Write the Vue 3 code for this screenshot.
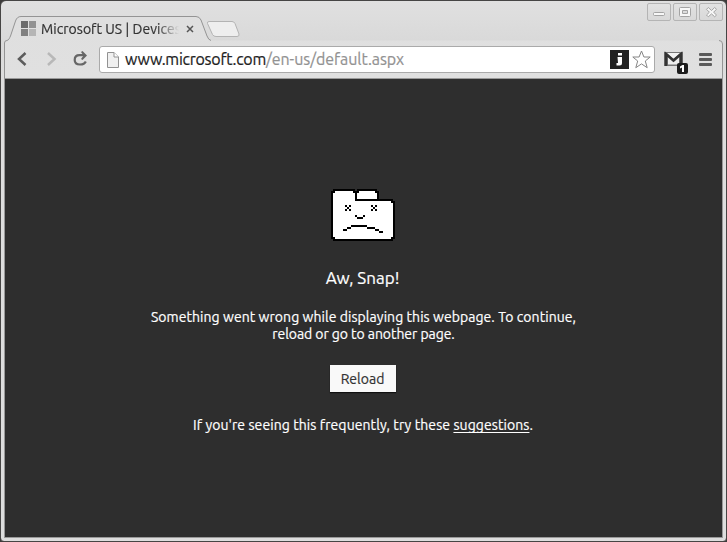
<script setup>
const face = [
  [1,0,11,1],[13,0,10,1],[0,1,1,24],[12,1,1,5],[23,1,1,5],[12,5,19,1],[31,6,1,19],[1,25,30,1],
  [1,1,1,1],[11,1,1,1],[13,1,1,1],[22,1,1,1],[1,24,1,1],[30,24,1,1],[30,6,1,1],
  [7,8,1,1],[9,8,1,1],[8,9,1,1],[7,10,1,1],[9,10,1,1],
  [20,8,1,1],[22,8,1,1],[21,9,1,1],[20,10,1,1],[22,10,1,1],
  [12,13,1,1],[16,13,1,1],[13,14,3,1],
  [10,18,8,1],[8,19,2,1],[18,19,4,1],[6,20,2,1],[22,20,2,1],[24,21,2,1]
]
</script>

<template>
  <div class="window">
    <svg class="frame" width="727" height="79" viewBox="0 0 727 79">
      <defs>
        <linearGradient id="bar" x1="0" y1="0" x2="0" y2="1"><stop offset="0" stop-color="#dfdfdf"/><stop offset="1" stop-color="#e0e0e0"/></linearGradient>
        <linearGradient id="bt" x1="0" y1="0" x2="0" y2="1"><stop offset="0" stop-color="#e2e2e2"/><stop offset="1" stop-color="#d8d8d8"/></linearGradient>
      </defs>
      <path d="M4.5 79V43Q4.500 40.500 7 40.500C9 40 9.500 38 10.500 36L15.500 21Q17 16.500 21 16.500H196Q199.500 16.500 201 20L207 36Q209 40.500 212 40.500H719Q722.500 40.500 722.500 44V79Z" fill="url(#bar)"/>
      <path d="M4.500 79V43Q4.500 40.500 7 40.500C9 40 9.500 38 10.500 36L15.500 21Q17 16.500 21 16.500H196Q199.500 16.500 201 20L207 36Q208.500 40 211 40.500" fill="none" stroke="#949494"/>
      <path d="M719 40.500Q722.500 40.500 722.500 44V79" fill="none" stroke="#949494"/>
      <path d="M209 21.500H232Q234 21.500 235 23.500L239 34Q239.500 36.500 237 36.500H216Q213.500 36.500 212.500 34.500L207.500 23.500Q207 21.500 209 21.500Z" fill="#eee" stroke="#b3b3b3"/>
      <g fill="url(#bt)" stroke="#b4b4b4"><rect x="647.500" y="3.500" width="23" height="17" rx="1.500"/><rect x="673.500" y="3.500" width="23" height="17" rx="1.500"/><rect x="699.500" y="3.500" width="23" height="17" rx="1.500"/></g>
      <g fill="#f7f7f7" stroke="#a3a3a3"><rect x="653.500" y="12.500" width="11" height="3" rx="1"/><path fill-rule="evenodd" d="M680.500 7.500H689.500Q690.500 7.500 690.500 8.500V15.500Q690.500 16.500 689.500 16.500H680.500Q679.500 16.500 679.500 15.500V8.500Q679.500 7.500 680.500 7.500ZM682.500 10.500V13.500H687.500V10.500Z"/><path d="M708.300 7.500L711.500 10.500L714.700 7.500L716.500 9.300L713.600 12.200L716.500 15L714.700 16.800L711.500 13.900L708.300 16.800L706.500 15L709.400 12.200L706.500 9.300Z"/></g>
    </svg>

    <header class="tabs">
      <svg class="favicon" width="15" height="15"><path fill="#6b6b6b" d="M0 0h7v7H0z"/><path fill="#929292" d="M8 0h7v7H8z"/><path fill="#808080" d="M0 8h7v7H0z"/><path fill="#b5b5b5" d="M8 8h7v7H8z"/></svg>
      <span class="tab-title">Microsoft US | Devices</span>
      <svg class="close" width="8" height="8" viewBox="0 0 8 8"><path d="M1 1L7 7M7 1L1 7" stroke="#555" stroke-width="1.500"/></svg>
    </header>

    <nav class="toolbar">
      <svg class="nav-icons" width="94" height="38" viewBox="0 0 94 38" fill="none">
        <path d="M20.500 13L14 19L20.500 25" stroke="#5c5c5c" stroke-width="2.500"/>
        <path d="M43 13L49.500 19L43 25" stroke="#b8b8b8" stroke-width="2.500"/>
        <path d="M79 15.200H74.500Q69.700 15.200 69.700 20Q69.700 24.500 75 24.500Q79.500 24.500 80.800 21.500" stroke="#666" stroke-width="2.200"/><path d="M76 12L77.500 11L82 15.500L77.500 20L76 19L78.500 15.500Z" fill="#666"/>
      </svg>
      <div class="address">
        <svg class="page-icon" width="12" height="16" viewBox="0 0 12 16"><path d="M.5 .5H7L11.500 5V15.500H.5Z" fill="#f0f0f0" stroke="#929292"/><path d="M7 .5V5H11.500" fill="#fff" stroke="#929292"/></svg>
        <span class="url"><b>www.microsoft.com</b>/en-us/default.aspx</span>
        <svg class="actions" width="44" height="22" viewBox="610 49 44 22"><rect x="610" y="50" width="19" height="19" fill="#222"/><path d="M618 53h4v2.500h-4zM617.500 57H622v6q0 2.500-2.500 2.500h-3V63h1.500z" fill="#fff"/><path d="M641.500 51L643.900 57H650.200L645.300 61L647.200 67.700L641.500 63.900L635.800 67.700L637.700 61L632.800 57H639.100Z" fill="#fff" stroke="#858585" stroke-linejoin="round"/></svg>
      </div>
      <svg class="extras" width="60" height="38" viewBox="660 41 60 38">
        <rect x="664" y="52" width="19" height="14" fill="#777"/><path d="M667 53H680L673.500 59Z" fill="#f2f2f2"/><path d="M668 56.500L673.500 62L679 56.500V64.500H668Z" fill="#eee"/><path d="M666 66V54L673.500 60.500L681 54V66" fill="none" stroke="#333" stroke-width="2.600"/>
        <rect x="677" y="63" width="11" height="11" rx="2" fill="#1c1c1c"/><path d="M680 66.500L682.500 65H684V72H682V67.500L680 68.500Z" fill="#fff"/>
        <g fill="#5a5a5a"><rect x="699" y="53" width="13" height="3" rx="1"/><rect x="699" y="58" width="13" height="3" rx="1"/><rect x="699" y="63" width="13" height="3" rx="1"/></g>
      </svg>
    </nav>

    <main class="content">
      <svg class="sad" width="64" height="52" viewBox="0 0 32 26" shape-rendering="crispEdges"><path d="M1 1H23V6H31V25H1Z" fill="#fff"/><rect v-for="(r,i) in face" :key="i" :x="r[0]" :y="r[1]" :width="r[2]" :height="r[3]" fill="#000"/></svg>
      <h1>Aw, Snap!</h1>
      <p class="msg">Something went wrong while displaying this webpage. To continue,<br><span class="second">reload or go to another page.</span></p>
      <button>Reload</button>
      <p class="hint">If you're seeing this frequently, try these <a>suggestions</a>.</p>
    </main>
  </div>
</template>

<style>
body { background: #3c3b3a; overflow: hidden; }
</style>
<style scoped>
.window { box-sizing: border-box; position: relative; width: 727px; height: 542px; padding: 1px 4px 4px; font-family: Ubuntu, "Noto Sans", sans-serif; background: linear-gradient(#e0e0e0, #d9d9d9 40px, #dedede 79px, #ddd); border: 1px solid #464544; border-radius: 6px 6px 4px 4px; display: flex; flex-direction: column; }
.frame { position: absolute; left: -1px; top: -1px; }
.tabs { position: relative; height: 39px; flex: none; display: flex; padding-left: 16px; box-sizing: border-box; }
.favicon { margin-top: 19px; flex: none; }
.tab-title { margin: 17px 0 0 5px; width: 138px; height: 22px; overflow: hidden; white-space: nowrap; font-size: 14px; line-height: 20px; letter-spacing: .04px; color: #333; -webkit-text-stroke: .2px; mask-image: linear-gradient(90deg, #000 116px, transparent 138px); }
.close { margin: 23px 0 0 7px; }
.toolbar { position: relative; height: 38px; flex: none; display: flex; box-sizing: border-box; border-bottom: 1px solid #aaa; }
.nav-icons { flex: none; margin-top: -1px; }
.address { box-sizing: border-box; width: 556px; height: 27px; margin-top: 5px; border: 1px solid #aaa; border-radius: 3px; background: #fff; display: flex; align-items: center; padding: 0 0 0 7px; }
.page-icon { flex: none; }
.url { margin: -2px 0 0 6px; font-size: 16px; line-height: 24px; letter-spacing: -.04px; white-space: nowrap; color: #929292; -webkit-text-stroke: .2px; }
.url b { font-weight: 400; letter-spacing: -.25px; color: #222; }
.actions { margin-left: auto; }
.extras { margin: 0 0 0 5px; flex: none; }
.content { position: relative; flex: 1; padding-right: 2px; background: #2e2e2e; color: #fff; text-align: center; display: flex; flex-direction: column; align-items: center; box-shadow: 0 0 0 1px #999; }
.sad { margin-top: 110px; flex: none; }
h1 { font-size: 17px; line-height: 22px; font-weight: 400; margin: 26px 0 0; -webkit-text-stroke: .2px; }
p { font-size: 14px; line-height: 17px; margin: 0; white-space: nowrap; -webkit-text-stroke: .2px; }
.msg { margin-top: 20px; padding-left: 2px; letter-spacing: .06px; }
.second { letter-spacing: -.06px; }
button { margin: 22px 0 0; width: 66px; height: 27px; padding: 0; border: 0; background: #f9f9f9; color: #333; font: 14px Ubuntu, "Noto Sans", sans-serif; -webkit-text-stroke: .2px; box-shadow: 0 1px 1px #111; }
.hint { margin-top: 25px; padding-left: 1px; letter-spacing: .08px; }
a { text-decoration: underline; text-underline-offset: 2px; text-decoration-skip-ink: none; }
</style>
